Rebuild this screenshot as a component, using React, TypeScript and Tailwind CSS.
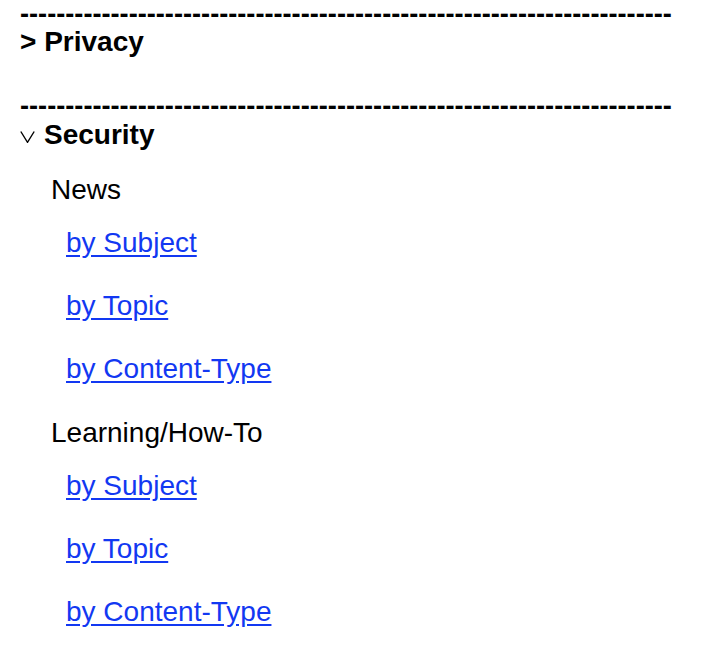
const DASHES = "-".repeat(72);

type Group = { title: string; links: string[] };

const groups: Group[] = [
  { title: "News", links: ["by Subject", "by Topic", "by Content-Type"] },
  { title: "Learning/How-To", links: ["by Subject", "by Topic", "by Content-Type"] },
];

function Divider({ className = "" }: { className?: string }) {
  return (
    <div className={`font-bold whitespace-nowrap text-[27.2px] leading-[24px] ${className}`}>{DASHES}</div>
  );
}

export default function App() {
  return (
    <div className="min-h-[662px] bg-white text-black text-[28px] leading-[31px] font-['Liberation_Sans',Arial,sans-serif]">
      <div className="pl-[20px]">
        {/* Privacy (collapsed) */}
        <Divider className="pt-[2px]" />
        <div className="font-bold">&gt; Privacy</div>

        {/* Security (expanded) */}
        <Divider className="mt-[37px] mb-[1px]" />
        <div className="flex font-bold">
          <span className="w-[24px] shrink-0">
            <svg width="15" height="12" viewBox="0 0 15 12" className="mt-[12px]" fill="none" stroke="#000" strokeWidth="1.4">
              <polyline points="0.8,0.5 7.5,11.3 14.2,0.5" />
            </svg>
          </span>
          <span>Security</span>
        </div>

        <div className="pl-[31px]">
          {groups.map((g, i) => (
            <div key={g.title} className={i === 0 ? "mt-[24px]" : "mt-[33px]"}>
              <div>{g.title}</div>
              <div className="pl-[15px] mt-[22px] flex flex-col gap-[32px]">
                {g.links.map((l) => (
                  <a key={l} href="#" className="text-[#1238f2] underline underline-offset-[3px] self-start">
                    {l}
                  </a>
                ))}
              </div>
            </div>
          ))}
        </div>
      </div>
    </div>
  );
}
